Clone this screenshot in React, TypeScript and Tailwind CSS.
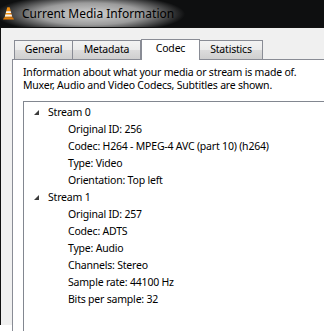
import React from "react";

const Cone = () => (
  <svg width="13" height="15" viewBox="0 0 13 15">
    <defs>
      <linearGradient id="cg" x1="0" y1="0" x2="1" y2="0">
        <stop offset="0" stopColor="#f7a21b" />
        <stop offset="0.6" stopColor="#f08a0c" />
        <stop offset="1" stopColor="#d86a04" />
      </linearGradient>
    </defs>
    <path d="M1 13.5 L12 13.5 L11 11.5 L2 11.5 Z" fill="#e07a08" />
    <path d="M2.6 11.5 L5.3 1.2 L7.7 1.2 L10.4 11.5 Z" fill="url(#cg)" />
    <path d="M4.3 5.2 L8.7 5.2 L9.2 7.1 L3.8 7.1 Z" fill="#f4f4f4" />
    <path d="M3.4 8.6 L9.6 8.6 L10.1 10.4 L2.9 10.4 Z" fill="#f4f4f4" />
  </svg>
);

const Arrow = () => (
  <svg width="7" height="7" viewBox="0 0 7 7">
    <path d="M6 1 L6 6 L1 6 Z" fill="#3c3c3c" />
  </svg>
);

type Node = { label: string; children: string[] };

const streams: Node[] = [
  {
    label: "Stream 0",
    children: [
      "Original ID: 256",
      "Codec: H264 - MPEG-4 AVC (part 10) (h264)",
      "Type: Video",
      "Orientation: Top left",
    ],
  },
  {
    label: "Stream 1",
    children: [
      "Original ID: 257",
      "Codec: ADTS",
      "Type: Audio",
      "Channels: Stereo",
      "Sample rate: 44100 Hz",
      "Bits per sample: 32",
    ],
  },
];

const tabBg = "bg-[linear-gradient(#f3f3f3,#ebebeb_50%,#dcdcdc_51%,#cfcfcf)]";

export default function App() {
  return (
    <div className="w-[324px] h-[332px] bg-white overflow-hidden text-[10.5px] tracking-[-0.2px] text-black font-['Noto_Sans',sans-serif]">
      {/* Title bar */}
      <div className="h-[27px] flex items-center bg-[#0e0f10] bg-[radial-gradient(ellipse_95px_20px_at_90px_14px,rgba(222,222,222,0.95)_0%,rgba(190,190,190,0.8)_55%,rgba(14,15,16,0)_100%)]">
        <div className="ml-[2px] mt-[-1px] flex items-center">
          <Cone />
        </div>
        <span className="ml-[7px] text-[12px] tracking-normal leading-none mt-[1px]">Current Media Information</span>
      </div>
      {/* Window body */}
      <div className="h-[298px] border-t border-l border-[#111] bg-[#f0f0f0] flex flex-col pl-[11px] pt-[11px]">
        {/* Tabs */}
        <div className="flex items-end ml-[2px] h-[21px] relative z-10">
          <div className={`w-[59px] h-[19px] mb-px border border-b-0 border-[#898c95] ${tabBg} flex items-center justify-center`}>
            General
          </div>
          <div className={`w-[68px] h-[19px] mb-px border border-b-0 border-l-0 border-[#898c95] ${tabBg} flex items-center justify-center`}>
            Metadata
          </div>
          <div className="w-[59px] h-[21px] border border-b-0 border-[#898c95] bg-white flex items-center justify-center pb-[2px]">
            Codec
          </div>
          <div className={`w-[63px] h-[19px] mb-px border border-b-0 border-l-0 border-[#898c95] ${tabBg} flex items-center justify-center`}>
            Statistics
          </div>
        </div>
        {/* Pane */}
        <div className="flex-1 w-[330px] -mt-px border-t border-l border-[#898c95] bg-white pl-[10px] pt-[6px]">
          <div className="leading-[13px]">
            <div className="whitespace-nowrap">Information about what your media or stream is made of.</div>
            <div className="whitespace-nowrap">Muxer, Audio and Video Codecs, Subtitles are shown.</div>
          </div>
          <div className="mt-[9px] h-[230px] border-t border-l border-[#828790] pt-[2px]">
            {streams.map((s) => (
              <div key={s.label}>
                <div className="h-[17px] flex items-center whitespace-nowrap">
                  <span className="ml-[9px] w-[15px] flex items-center">
                    <Arrow />
                  </span>
                  <span>{s.label}</span>
                </div>
                {s.children.map((c) => (
                  <div key={c} className="h-[17px] flex items-center whitespace-nowrap pl-[44px]">
                    {c}
                  </div>
                ))}
              </div>
            ))}
          </div>
        </div>
      </div>
    </div>
  );
}
